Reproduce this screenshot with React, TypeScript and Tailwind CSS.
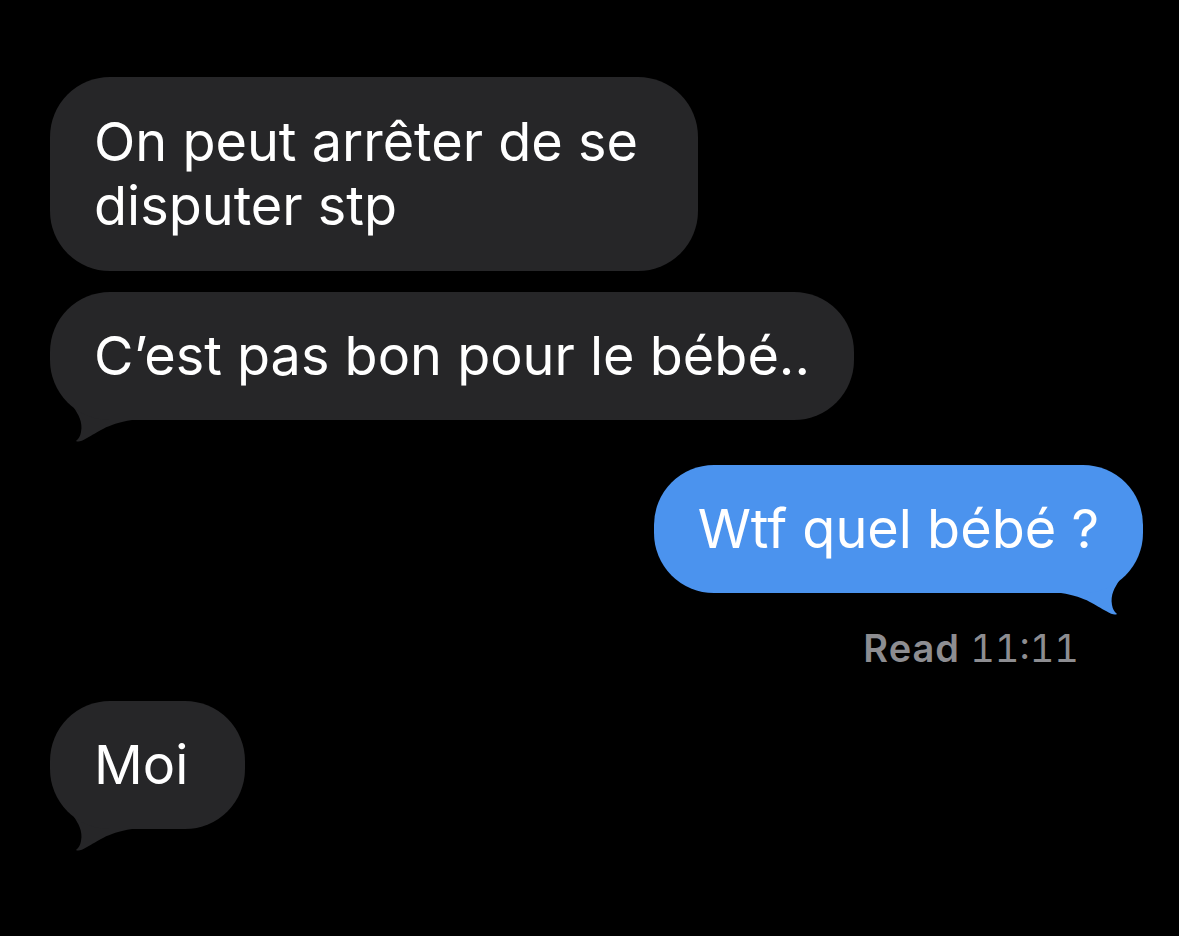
import React from "react";

const GRAY = "#262628";
const BLUE = "#4b93ee";

// the little curled tail under an iMessage bubble
const Tail = ({ side, color }: { side: "left" | "right"; color: string }) => (
  <svg
    width="84"
    height="64"
    viewBox="0 0 84 64"
    className={
      side === "left"
        ? "absolute left-0 bottom-[-24px]"
        : "absolute right-0 bottom-[-24px] -scale-x-100"
    }
  >
    <path
      d="M18 16 L24 28 C28 34, 33 42, 31 52 Q30 58, 26 61 Q29 63, 37 58 C47 53, 56 44, 82 40 L82 16 Z"
      fill={color}
    />
  </svg>
);

type BubbleProps = {
  children: React.ReactNode;
  from: "them" | "me";
  tail?: boolean;
  className?: string;
  inner?: string;
};

const Bubble = ({ children, from, tail, className, inner }: BubbleProps) => {
  const color = from === "me" ? BLUE : GRAY;
  return (
    <div
      className={`relative ${from === "me" ? "self-end" : "self-start"} ${className ?? ""}`}
    >
      {tail && <Tail side={from === "me" ? "right" : "left"} color={color} />}
      <div
        className={`relative rounded-[60px] pl-[44px] text-white text-[54px] leading-[64px] whitespace-nowrap ${inner ?? "pr-[44px] py-[32px]"}`}
        style={{ backgroundColor: color }}
      >
        {children}
      </div>
    </div>
  );
};

export default function App() {
  return (
    <div
      className="w-[1179px] h-[936px] bg-black overflow-hidden flex flex-col pl-[50px] pr-[36px] pt-[77px]"
      style={{ fontFamily: "Inter, 'Noto Sans', sans-serif" }}
    >
      <Bubble from="them" inner="w-[648px] py-[33px]">
        On peut arrêter de se
        <br />
        disputer stp
      </Bubble>
      <Bubble from="them" tail className="mt-[21px]">
        C’est pas bon pour le bébé..
      </Bubble>
      <Bubble from="me" tail className="mt-[45px]">
        Wtf quel bébé ?
      </Bubble>
      <div className="self-end mr-[64px] mt-[32px] text-[38px] leading-[46px] text-[#8d8d91] tabular-nums">
        <span className="font-semibold tracking-[1px]">Read</span> 11:11
      </div>
      <Bubble from="them" tail className="mt-[30px]" inner="pr-[57px] py-[32px]">
        Moi
      </Bubble>
    </div>
  );
}
